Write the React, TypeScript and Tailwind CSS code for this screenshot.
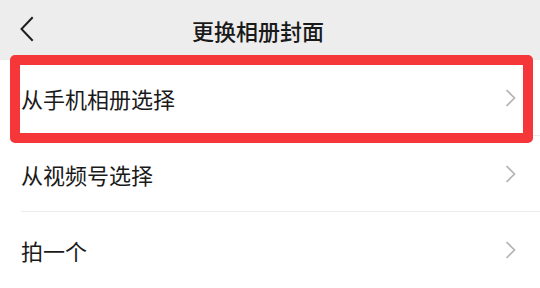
const rows = ["从手机相册选择", "从视频号选择", "拍一个"]

function BackArrow() {
    return (
        <svg width="16" height="26" viewBox="0 0 16 26" className="absolute left-[19px] top-[16px]">
            <path d="M13 2 L2.5 13 L13 24" fill="none" stroke="#1f1f1f" strokeWidth="2" strokeLinecap="square" />
        </svg>
    )
}

function RowArrow() {
    return (
        <svg width="11" height="20" viewBox="0 0 11 20">
            <path d="M1.5 2 L9.5 10 L1.5 18" fill="none" stroke="#b3b3b3" strokeWidth="1.6" />
        </svg>
    )
}

function App() {
    return (
        <div className="relative w-[540px] h-[288px] overflow-hidden bg-white font-['Noto_Sans_CJK_SC',sans-serif] text-[#1a1a1a]">
            <div className="h-[60px] bg-[#ededed] flex items-center relative">
                <BackArrow />
                <h1 className="w-full text-center text-[22px] font-medium leading-none pr-[24px]">更换相册封面</h1>
            </div>

            <div className="pl-[21px]">
                {rows.map((label, i) => {
                    return (
                        <div key={label} className={"h-[76px] flex items-center pr-[24px] " + (i < rows.length - 1 ? "border-b border-b-[#ececec]" : "")}>
                            <span className="flex-1 text-[22px] leading-none">{label}</span>
                            <RowArrow />
                        </div>
                    )
                })}
            </div>

            {/* red highlight box over first row */}
            <div className="absolute left-[10px] top-[55px] w-[523px] h-[88px] border-[10px] border-[#f5373a] rounded-[5px]"></div>
        </div>
    )
}

export default App
